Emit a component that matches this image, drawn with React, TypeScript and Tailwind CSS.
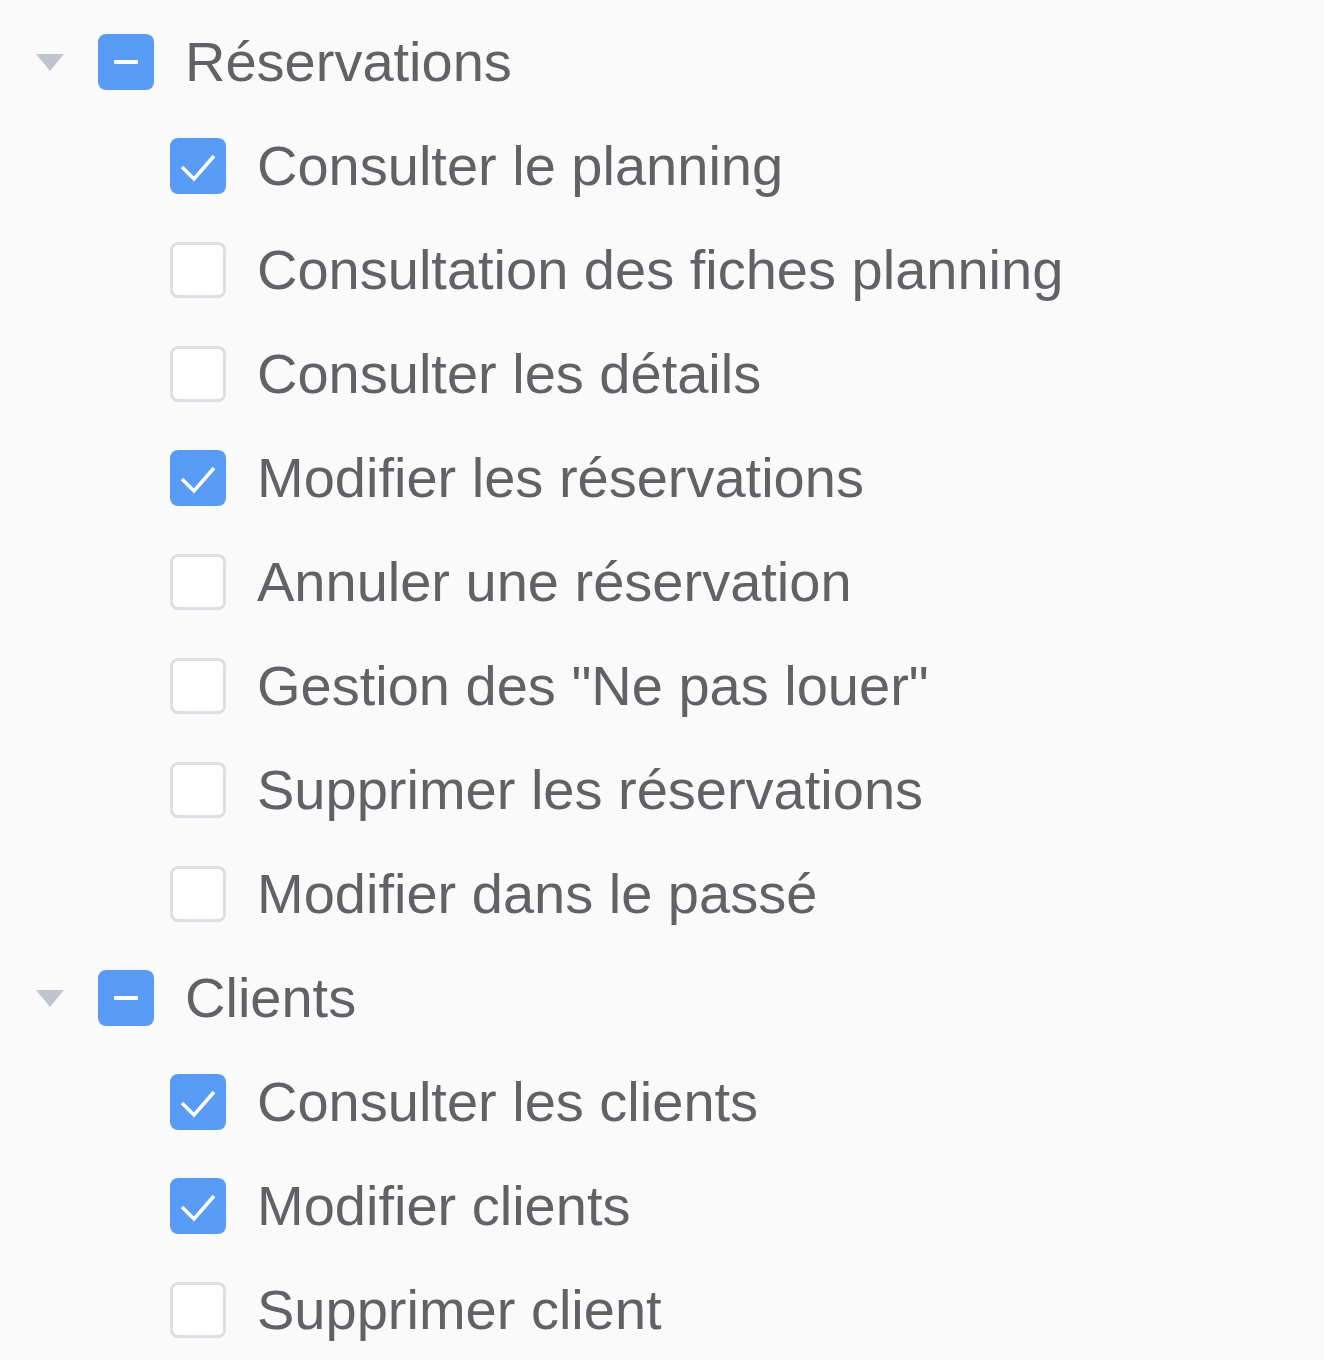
const tree = [
  {
    label: "Réservations",
    children: [
      { label: "Consulter le planning", checked: true },
      { label: "Consultation des fiches planning", checked: false },
      { label: "Consulter les détails", checked: false },
      { label: "Modifier les réservations", checked: true },
      { label: "Annuler une réservation", checked: false },
      { label: 'Gestion des "Ne pas louer"', checked: false },
      { label: "Supprimer les réservations", checked: false },
      { label: "Modifier dans le passé", checked: false },
    ],
  },
  {
    label: "Clients",
    children: [
      { label: "Consulter les clients", checked: true },
      { label: "Modifier clients", checked: true },
      { label: "Supprimer client", checked: false },
    ],
  },
];

function Box({ state }: { state: "checked" | "empty" | "partial" }) {
  if (state === "empty") {
    return <span className="w-[56px] h-[56px] shrink-0 rounded-[8px] border-[3px] border-[#dcdfe6] bg-white" />;
  }
  return (
    <span className="w-[56px] h-[56px] shrink-0 rounded-[8px] bg-[#589cf8] flex items-center justify-center">
      {state === "checked" ? (
        <svg width="56" height="56" viewBox="0 0 56 56">
          <polyline points="12,29 24,41 44,18" fill="none" stroke="white" strokeWidth="3.5" />
        </svg>
      ) : (
        <span className="w-[24px] h-[4px] bg-white rounded-[1px]" />
      )}
    </span>
  );
}

export default function App() {
  return (
    <main className="min-h-screen bg-[#fafafa] pt-[10px] font-['Liberation_Sans',Arial,sans-serif] text-[#606266]">
      {tree.map((group) => (
        <div key={group.label}>
          {/* parent node */}
          <div className="h-[104px] flex items-center pl-[36px]">
            <svg width="28" height="17" viewBox="0 0 28 17" className="shrink-0">
              <polygon points="0,0 28,0 14,17" fill="#c0c4cc" />
            </svg>
            <span className="ml-[34px]">
              <Box state="partial" />
            </span>
            <span className="ml-[31px] text-[56px] leading-none">{group.label}</span>
          </div>

          {/* children */}
          {group.children.map((item) => (
            <div key={item.label} className="h-[104px] flex items-center pl-[170px]">
              <Box state={item.checked ? "checked" : "empty"} />
              <span className="ml-[31px] text-[56px] leading-none">{item.label}</span>
            </div>
          ))}
        </div>
      ))}
    </main>
  );
}
